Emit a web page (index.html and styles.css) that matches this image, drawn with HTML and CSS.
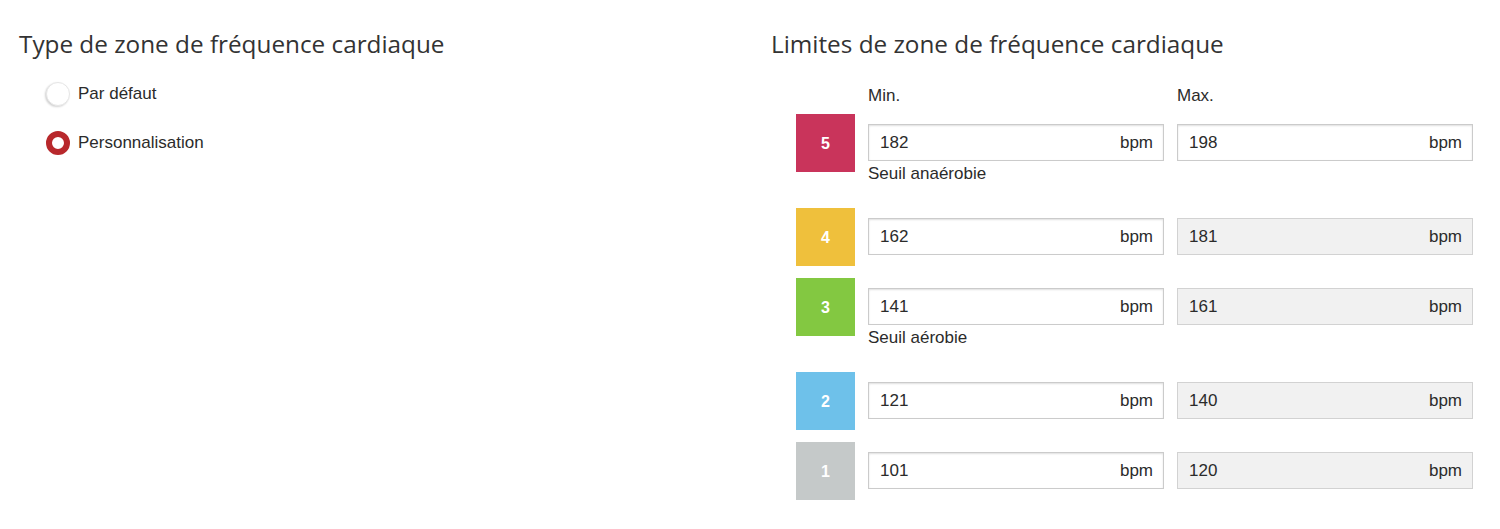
FILE: index.html
```html
<!DOCTYPE html>
<html lang="fr">
<head>
<meta charset="utf-8">
<title>Zones de fréquence cardiaque</title>
<link rel="stylesheet" href="styles.css">
</head>
<body>
<div class="page">
  <section class="col">
    <h2 class="title">Type de zone de fréquence cardiaque</h2>
    <div class="radio-group">
      <label class="radio-row"><span class="radio"></span><span class="radio-label">Par défaut</span></label>
      <label class="radio-row"><span class="radio checked"></span><span class="radio-label">Personnalisation</span></label>
    </div>
  </section>
  <section class="col">
    <h2 class="title">Limites de zone de fréquence cardiaque</h2>
    <div class="zones">
      <div class="zone-head">
        <span class="head-cell">Min.</span>
        <span class="head-cell">Max.</span>
      </div>
      <div class="zone-row">
        <div class="swatch z5">5</div>
        <div class="fields">
          <div class="pair">
            <div class="field"><span>182</span><span>bpm</span></div>
            <div class="field"><span>198</span><span>bpm</span></div>
          </div>
          <div class="hint">Seuil anaérobie</div>
        </div>
      </div>
      <div class="zone-row">
        <div class="swatch z4">4</div>
        <div class="fields">
          <div class="pair">
            <div class="field"><span>162</span><span>bpm</span></div>
            <div class="field disabled"><span>181</span><span>bpm</span></div>
          </div>
        </div>
      </div>
      <div class="zone-row">
        <div class="swatch z3">3</div>
        <div class="fields">
          <div class="pair">
            <div class="field"><span>141</span><span>bpm</span></div>
            <div class="field disabled"><span>161</span><span>bpm</span></div>
          </div>
          <div class="hint">Seuil aérobie</div>
        </div>
      </div>
      <div class="zone-row">
        <div class="swatch z2">2</div>
        <div class="fields">
          <div class="pair">
            <div class="field"><span>121</span><span>bpm</span></div>
            <div class="field disabled"><span>140</span><span>bpm</span></div>
          </div>
        </div>
      </div>
      <div class="zone-row">
        <div class="swatch z1">1</div>
        <div class="fields">
          <div class="pair">
            <div class="field"><span>101</span><span>bpm</span></div>
            <div class="field disabled"><span>120</span><span>bpm</span></div>
          </div>
        </div>
      </div>
    </div>
  </section>
</div>
</body>
</html>
```

FILE: styles.css
```css
html, body {
  margin: 0;
  padding: 0;
  background: #ffffff;
}

body {
  font-family: "Liberation Sans", Arial, sans-serif;
  font-size: 17px;
  color: #2b2b2b;
}

.page {
  display: grid;
  grid-template-columns: 752px 1fr;
  padding: 28px 0 0 19px;
}

.title {
  margin: 0;
  font-family: "Open Sans", sans-serif;
  font-weight: 400;
  font-size: 24.3px;
  line-height: 32px;
  color: #333333;
}

.radio-group {
  display: flex;
  flex-direction: column;
  gap: 25px;
  margin-top: 22px;
  padding-left: 27px;
}

.radio-row {
  display: flex;
  align-items: center;
  gap: 8px;
  height: 24px;
}

.radio {
  box-sizing: border-box;
  width: 24px;
  height: 24px;
  border-radius: 50%;
  background: #ffffff;
  border: 1px solid #e6e6e6;
  box-shadow: -1px 1px 2px rgba(0, 0, 0, 0.18);
}

.radio.checked {
  border: 6.5px solid #b8282c;
  box-shadow: none;
}

.radio-label {
  line-height: 20px;
}

.zones {
  margin-top: 26px;
  margin-left: 25px;
}

.zone-head {
  display: flex;
  gap: 13px;
  padding-left: 72px;
  margin-bottom: 8px;
  line-height: 20px;
}

.head-cell {
  width: 296px;
}

.zone-row {
  display: flex;
  gap: 13px;
  align-items: flex-start;
  margin-bottom: 12px;
}

.swatch {
  width: 59px;
  height: 58px;
  display: flex;
  align-items: center;
  justify-content: center;
  color: #ffffff;
  font-weight: 700;
  font-size: 16px;
  padding-top: 2px;
  box-sizing: border-box;
}

.z5 { background: #c9345b; }
.z4 { background: #efc03c; }
.z3 { background: #83c841; }
.z2 { background: #6ec1ea; }
.z1 { background: #c5c9c9; }

.fields {
  padding-top: 10px;
}

.pair {
  display: flex;
  gap: 13px;
}

.field {
  box-sizing: border-box;
  width: 296px;
  height: 37px;
  display: flex;
  align-items: center;
  justify-content: space-between;
  padding: 0 10px 0 11px;
  border: 1px solid #cbcbcb;
  box-shadow: inset 0 1px 2px rgba(0, 0, 0, 0.13);
  background: #ffffff;
  color: #2b2b2b;
}

.field.disabled {
  background: #f1f1f1;
  border-color: #d2d2d2;
  box-shadow: none;
}

.hint {
  line-height: 20px;
  margin-top: 3px;
  margin-bottom: 12px;
}
```
